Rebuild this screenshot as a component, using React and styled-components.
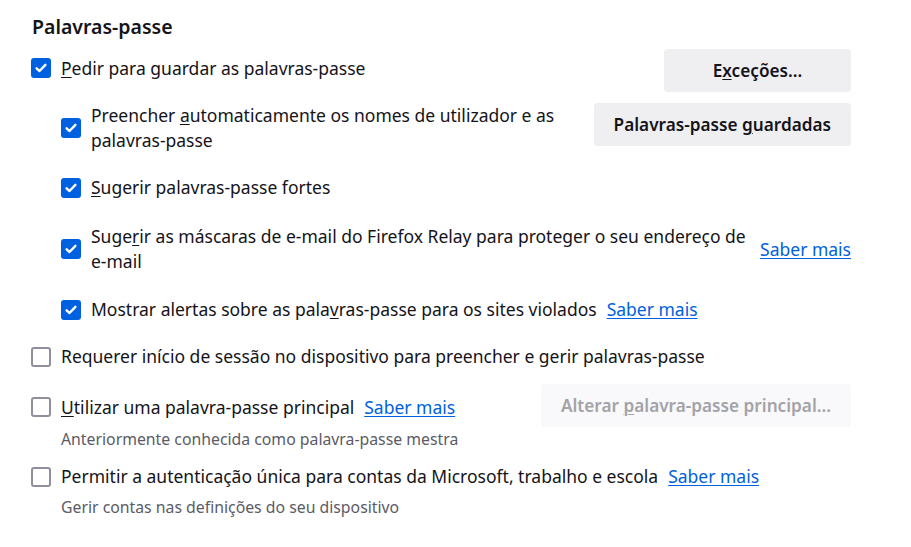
import React from "react";
import styled, { createGlobalStyle } from "styled-components";

const GlobalStyle = createGlobalStyle`
  body {
    margin: 0;
    background: #ffffff;
    color: #15141a;
    font-family: "Noto Sans", "Open Sans", sans-serif;
  }
`;

const Page = styled.div`
  box-sizing: border-box;
  width: 911px;
  padding: 14px 60px 30px 31px;
`;

const Heading = styled.h2`
  margin: 0 0 0 1px;
  font-size: 19.5px;
  font-weight: 600;
  line-height: 26px;
`;

const Row = styled.div`
  display: flex;
  align-items: ${(p) => p.$align || "center"};
  margin-top: ${(p) => p.$top || 0}px;
  padding-left: ${(p) => (p.$nested ? 30 : 0)}px;
`;

const Label = styled.label`
  display: flex;
  align-items: center;
  flex: ${(p) => (p.$fit ? "none" : 1)};
  min-width: 0;
  font-size: 17.5px;
  line-height: 25px;
  margin-top: ${(p) => p.$shift || 0}px;
`;

const Box = styled.span`
  flex: none;
  box-sizing: border-box;
  width: 20px;
  height: 20px;
  margin-right: 10px;
  border-radius: 3px;
  display: inline-flex;
  align-items: center;
  justify-content: center;
  background: ${(p) => (p.$checked ? "#0061e0" : "#ffffff")};
  border: ${(p) => (p.$checked ? "none" : "2px solid #8f8f9d")};
`;

const Text = styled.span`
  white-space: nowrap;
`;

const AccessKey = styled.u`
  text-decoration-thickness: 1px;
  text-underline-offset: 2px;
`;

const Link = styled.a`
  flex: none;
  color: #0061e0;
  font-size: 17.5px;
  line-height: 25px;
  text-decoration: underline;
  text-underline-offset: 2px;
  margin-left: ${(p) => (p.$end ? "auto" : "10px")};
`;

const Button = styled.button`
  flex: none;
  box-sizing: border-box;
  height: 43px;
  min-width: ${(p) => p.$min || 0}px;
  padding: 0 20px;
  margin-left: auto;
  border: 0;
  border-radius: 4px;
  background: ${(p) => (p.disabled ? "#f9f9fb" : "#efeff2")};
  color: ${(p) => (p.disabled ? "#a3a3a8" : "#15141a")};
  font-family: inherit;
  font-size: 17.2px;
  font-weight: 600;
`;

const Hint = styled.div`
  margin-top: ${(p) => p.$top || 0}px;
  padding-left: 30px;
  font-size: 15.8px;
  line-height: 20px;
  color: #5b5b66;
`;

function Check({ checked }) {
  return (
    <Box $checked={checked}>
      {checked && (
        <svg width="14" height="14" viewBox="0 0 14 14">
          <path
            d="M2.6 7.3 L5.5 10 L11.4 3.8"
            fill="none"
            stroke="#ffffff"
            strokeWidth="2.4"
            strokeLinecap="round"
            strokeLinejoin="round"
          />
        </svg>
      )}
    </Box>
  );
}

export default function App() {
  return (
    <>
      <GlobalStyle />
      <Page>
        <Heading>Palavras-passe</Heading>

        <Row $top={9}>
          <Label $shift={-5}>
            <Check checked />
            <Text>
              <AccessKey>P</AccessKey>edir para guardar as palavras-passe
            </Text>
          </Label>
          <Button $min={187}>
            E<AccessKey>x</AccessKey>ceções...
          </Button>
        </Row>

        <Row $top={11} $nested $align="flex-start">
          <Label>
            <Check checked />
            <Text>
              Preencher <AccessKey>a</AccessKey>utomaticamente os nomes de utilizador e as
              <br />
              palavras-passe
            </Text>
          </Label>
          <Button>
            Palavras-passe <AccessKey>g</AccessKey>uardadas
          </Button>
        </Row>

        <Row $top={22} $nested>
          <Label>
            <Check checked />
            <Text>
              <AccessKey>S</AccessKey>ugerir palavras-passe fortes
            </Text>
          </Label>
        </Row>

        <Row $top={24} $nested>
          <Label>
            <Check checked />
            <Text>
              Suge<AccessKey>r</AccessKey>ir as máscaras de e-mail do Firefox Relay para proteger o seu endereço de
              <br />
              e-mail
            </Text>
          </Label>
          <Link href="#" $end>
            Saber mais
          </Link>
        </Row>

        <Row $top={23} $nested>
          <Label $fit>
            <Check checked />
            <Text>
              Mostrar alertas sobre as pala<AccessKey>v</AccessKey>ras-passe para os sites violados
            </Text>
          </Label>
          <Link href="#">Saber mais</Link>
        </Row>

        <Row $top={22}>
          <Label>
            <Check />
            <Text>
              Requerer início de sessão no dispositivo para preencher e gerir palavras-passe
            </Text>
          </Label>
        </Row>

        <Row $top={15}>
          <Label $shift={3}>
            <Check />
            <Text>
              <AccessKey>U</AccessKey>tilizar uma palavra-passe principal
            </Text>
            <Link href="#">Saber mais</Link>
          </Label>
          <Button disabled>
            Alterar <AccessKey>p</AccessKey>alavra-passe principal...
          </Button>
        </Row>
        <Hint $top={2}>Anteriormente conhecida como palavra-passe mestra</Hint>

        <Row $top={15}>
          <Label>
            <Check />
            <Text>
              Permitir a autenticação única para contas da Microsoft, trabalho e escola
            </Text>
            <Link href="#">Saber mais</Link>
          </Label>
        </Row>
        <Hint $top={8}>Gerir contas nas definições do seu dispositivo</Hint>
      </Page>
    </>
  );
}
